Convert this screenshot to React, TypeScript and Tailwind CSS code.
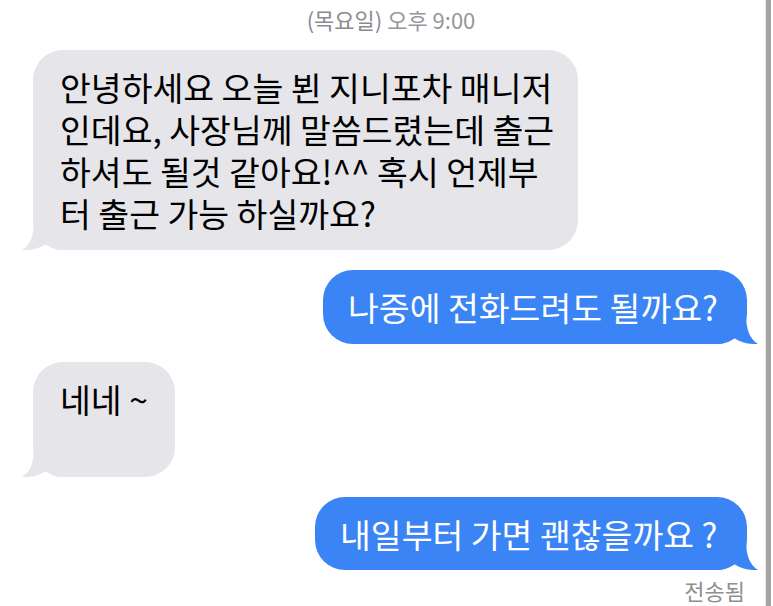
import React from 'react'

const font = "font-['Noto_Sans_CJK_KR','Noto_Sans',sans-serif]"

const Tail = ({ color, side }: { color: string; side: 'left' | 'right' }) => (
  <svg
    width="44"
    height="30"
    viewBox="0 0 44 30"
    className={
      side === 'left'
        ? 'absolute left-[-13px] bottom-0'
        : 'absolute right-[-13px] bottom-0 scale-x-[-1]'
    }
  >
    <path
      d="M14 0 C14 16 10 25 2 30 C11 30.5 19 28.5 26 24 C31 28 37 30 44 30 L44 0 Z"
      fill={color}
    />
  </svg>
)

const Received = ({ children, className }: { children: React.ReactNode; className: string }) => (
  <div className={`relative ml-[33px] rounded-[30px] bg-[#e5e5ea] text-black ${className}`}>
    <Tail color="#e5e5ea" side="left" />
    <div className="relative whitespace-pre">{children}</div>
  </div>
)

const Sent = ({ children, className }: { children: React.ReactNode; className: string }) => (
  <div className={`relative self-end mr-[18px] rounded-[30px] bg-[#3a84f5] text-white ${className}`}>
    <Tail color="#3a84f5" side="right" />
    <div className="relative whitespace-nowrap">{children}</div>
  </div>
)

export default function App() {
  return (
    <div className={`flex w-[773px] h-[606px] bg-white overflow-hidden ${font}`}>
      <div className="flex flex-col w-[765px]">
        <div className="pt-[6px] pl-[17px] h-[32px] text-center text-[22px] leading-[26px] text-[#96969b]">
          <span className="text-[#8a8a8f]">(목요일)</span> 오후 9:00
        </div>

        <Received className="mt-[18px] w-[545px] h-[200px] px-[27px] py-[16px] text-[33.5px] leading-[42px]">
          {'안녕하세요 오늘 뵌 지니포차 매니저\n인데요, 사장님께 말씀드렸는데 출근\n하셔도 될것 같아요!^^ 혹시 언제부\n터 출근 가능 하실까요?'}
        </Received>

        <Sent className="mt-[20px] w-[424px] h-[74px] pl-[25px] py-[16px] text-[33.5px] leading-[42px]">
          나중에 전화드려도 될까요?
        </Sent>

        <Received className="mt-[18px] w-[142px] h-[115px] px-[27px] py-[16px] text-[33.5px] leading-[42px]">
          네네 ~
        </Received>

        <Sent className="mt-[20px] w-[432px] h-[73px] pl-[25px] py-[16px] text-[33.5px] leading-[42px]">
          내일부터 가면 괜찮을까요 ?
        </Sent>

        <div className="self-end mt-[7px] mr-[20px] text-[22px] leading-[26px] text-[#8e8e93]">
          전송됨
        </div>
      </div>
      <div className="w-px bg-[#ececec]" />
      <div className="w-[5px] bg-[#a3a3a3]" />
      <div className="w-[2px] bg-white" />
    </div>
  )
}
